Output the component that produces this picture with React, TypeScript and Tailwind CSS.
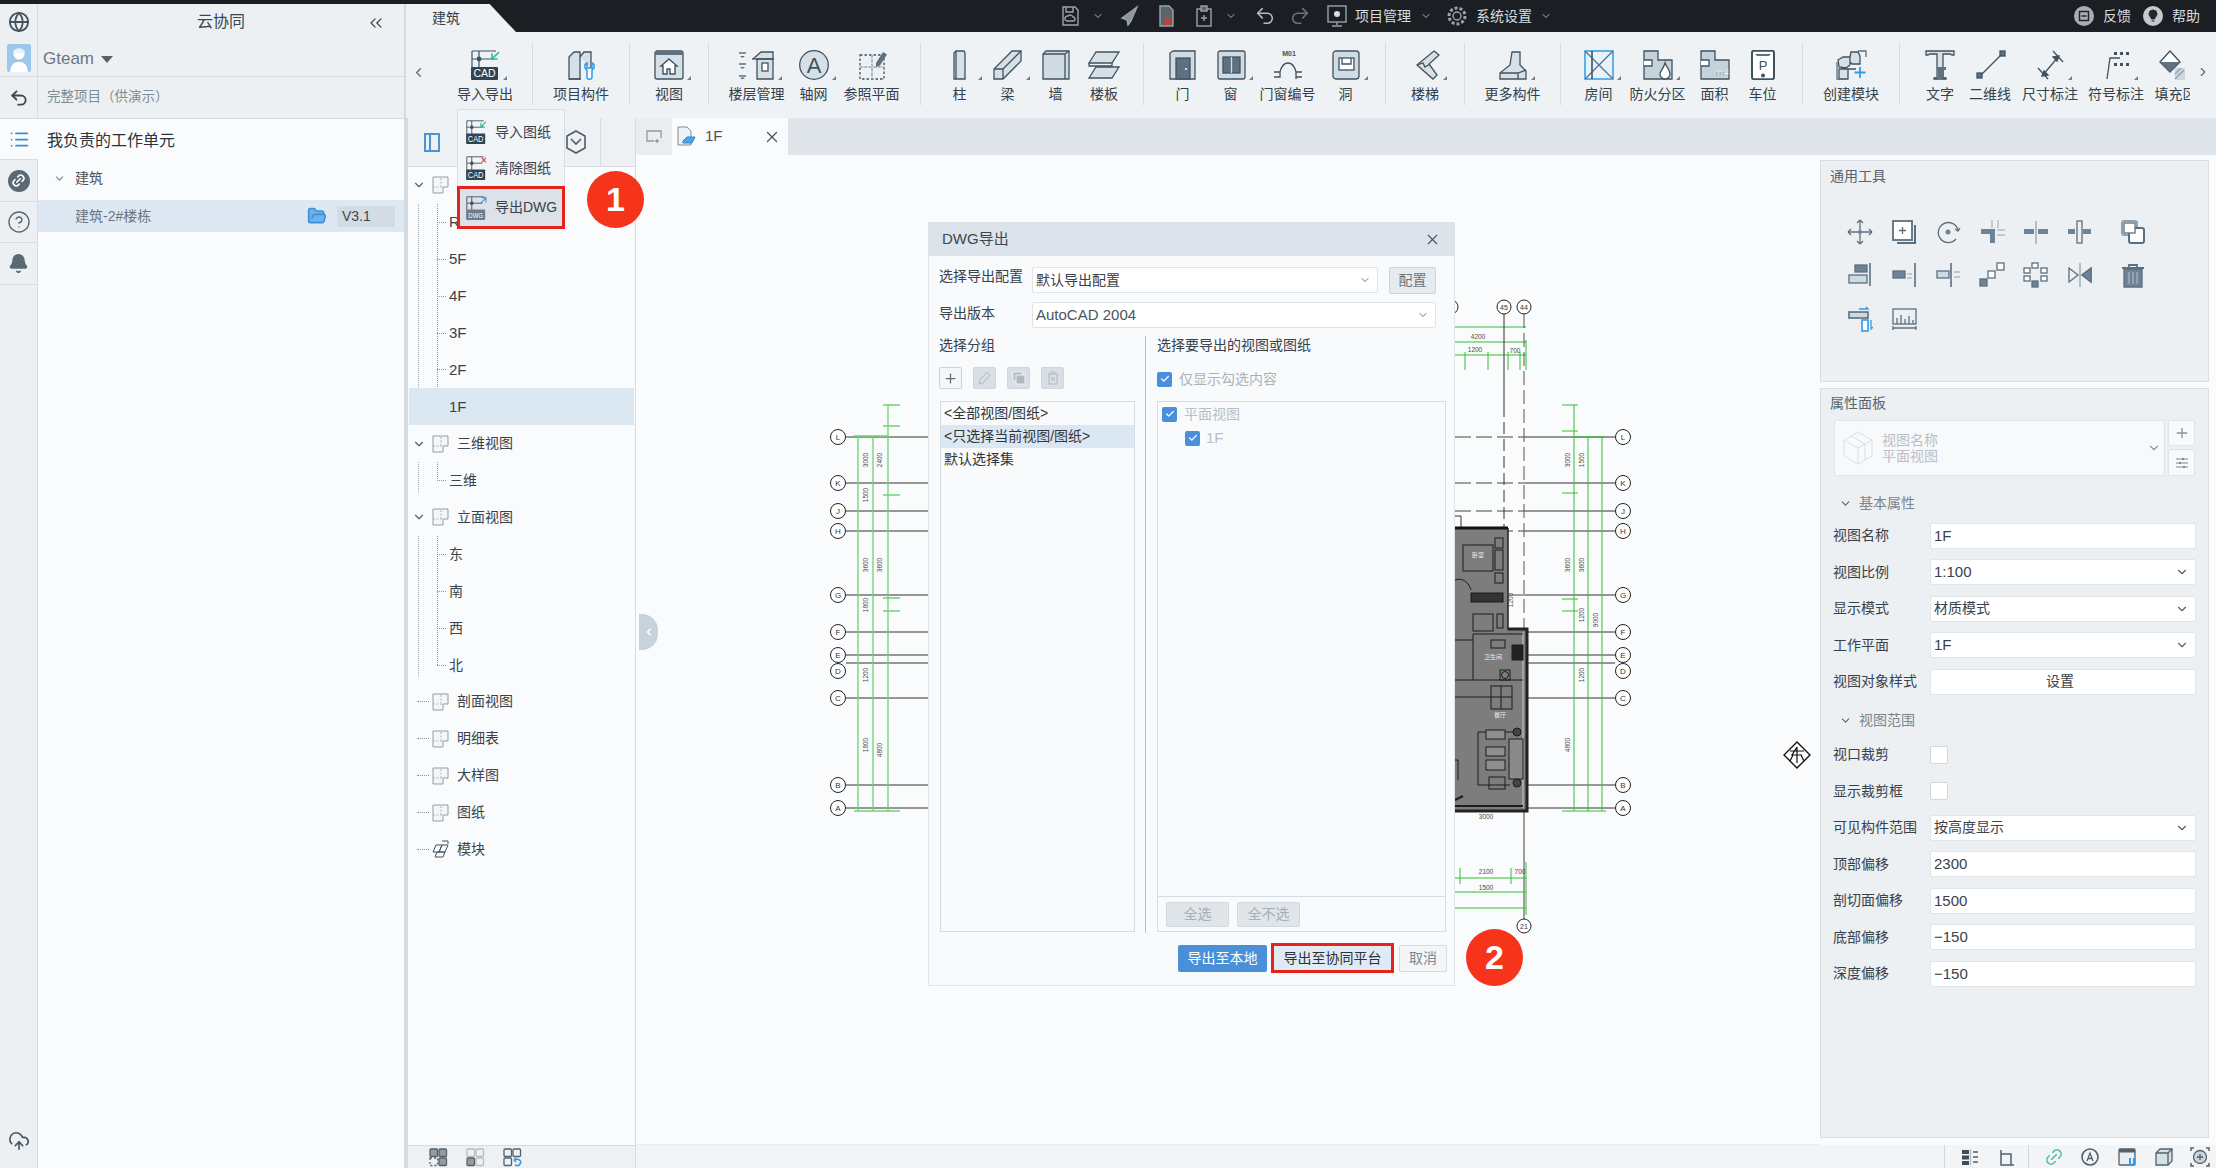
import React from "react";
import { ChevronDown, ChevronLeft, ChevronRight, ChevronsLeft, Bell, CircleHelp, List, Link2, Undo2, Redo2, CloudUpload, X, Plus, Check, Globe, FolderOpen } from "lucide-react";

const ST = "#41525f";
const FL = "#d5e0e7";
const DK = "#5d7182";
const BL = "#2f9bea";

const Svg = ({ w = 34, h = 30, children }: { w?: number; h?: number; children: React.ReactNode }) => (
  <svg width={w} height={h} viewBox={`0 0 ${w} ${h}`} fill="none" stroke={ST} strokeWidth={1.3}>
    {children}
  </svg>
);

const CadBase = ({ arrow, label = "CAD", dark = "#2f4352" }: { arrow: string; label?: string; dark?: string }) => (
  <>
    <path d="M4 1h24M4 1v17M4 9h22M11 1v17" strokeWidth={1.2} />
    <circle cx="11" cy="9" r="2.4" fill={ST} stroke="none" />
    {arrow === "in" && <path d="M31 2l-7 7M24 3.5V9h5.5" stroke="#2db7a3" strokeWidth={1.6} />}
    {arrow === "out" && <path d="M24 9l7-7M25 2h6v6" stroke={BL} strokeWidth={1.6} />}
    {arrow === "del" && <path d="M25 2l6 6M31 2l-6 6" stroke="#e2403a" strokeWidth={1.6} />}
    <rect x="3" y="17" width="27" height="13" rx="1" fill={dark} stroke="none" />
    <text x="16.5" y="27.4" textAnchor="middle" fontSize={label === "CAD" ? 10.5 : 8.5} fill="#fff" stroke="none" fontFamily="Liberation Sans">{label}</text>
  </>
);

const icons: Record<string, React.ReactNode> = {
  cad: <Svg><CadBase arrow="in" /></Svg>,
  comp: <Svg><path d="M5 29V7l5-5h6v27zM16 7l4-5h7v17" fill={FL} /><path d="M5 29h12" /><path d="M23 13c-3 1-3 5 0 7v7c0 3 5 3 5 0v-7c3-2 3-6 0-7v5h-5z" fill="#fff" stroke={BL} strokeWidth={1.5} /></Svg>,
  view: <Svg><rect x="3" y="1" width="28" height="28" rx="2" fill={FL} /><rect x="3" y="1" width="28" height="4" fill={DK} stroke="none" /><path d="M17 9l8 7h-2v8h-5v-5h-3v5h-4v-8H9z" fill="#fff" strokeWidth={1.4} /></Svg>,
  floors: <Svg w={40}><path d="M2 3h7M2 14h7M2 26h7" stroke={DK} strokeWidth={1.4} /><path d="M3 6l2.500 2 2.500-2zM3 17l2.500 2 2.500-2zM3 29l2.500-2 2.500 2z" fill={DK} stroke="none" /><path d="M16 9l8-7h12v7M20 9v20h16V9z" fill={FL} /><path d="M15 9h22" /><rect x="25" y="13" width="6" height="8" fill="#fff" /></Svg>,
  axis: <Svg><circle cx="17" cy="15" r="14.300" fill={FL} /><text x="17" y="23" textAnchor="middle" fontSize="22" fill={ST} stroke="none" fontFamily="Liberation Sans">A</text></Svg>,
  ref: <Svg><path d="M5 5h24v24H5zM5 17h24M17 5v24" strokeDasharray="2.500 2" /><path d="M5 17h24M17 5v24" stroke="#c3d0d9" /><path d="M21 13l7-11 4 2.500-7 11-4 1.500z" fill={DK} stroke="none" /></Svg>,
  col: <Svg><path d="M11 29V3l2-2h8l1 2v26z" fill={FL} /><path d="M13 29V1" /></Svg>,
  beam: <Svg><path d="M3 29V19L21 1h9v10L12 29z" fill={FL} /><path d="M3 19h9v10M12 19L30 1" /></Svg>,
  wall: <Svg><path d="M4 29V4l3-3h23v28z" fill="#cfdce4" /><path d="M4 4h22v25M26 4l4-3" /></Svg>,
  slab: <Svg><path d="M9 2h23l-7 11H2zM9 17h23l-7 11H2z" fill={FL} /><path d="M2 13v3h23v-3M2 28" /></Svg>,
  door: <Svg><path d="M4 29V3l3-2h22v28z" fill="#cfdce4" /><rect x="10" y="8" width="14" height="21" fill={DK} /><circle cx="20" cy="19" r="1" fill="#fff" stroke="none" /></Svg>,
  win: <Svg><rect x="4" y="1" width="27" height="28" rx="2" fill="#cfdce4" /><rect x="9" y="7" width="17" height="16" fill={DK} /><path d="M17.500 7v16" stroke="#cfdce4" /></Svg>,
  tag: <Svg><text x="18" y="6" textAnchor="middle" fontSize="7" fontWeight="700" fill={ST} stroke="none" fontFamily="Liberation Sans">M01</text><path d="M3 22h6c3-12 13-12 16 0v7M25 22h6M25 27h6M3 27h6v-5" /></Svg>,
  hole: <Svg><rect x="4" y="1" width="26" height="28" rx="3" fill="#cfdce4" /><rect x="10" y="8" width="15" height="12" fill="#fff" /><path d="M13 8v6h9V8" /></Svg>,
  stair: <Svg><path d="M26 1l5 4-10 9 8 11-4 4-16-14z" fill={FL} /><path d="M9 15l6-2 2 4 5-3" /></Svg>,
  more: <Svg><path d="M16 2h8v13l6 6v8H4v-6l10-8z" fill={FL} /><path d="M4 23h18l8-3M22 23v6" /></Svg>,
  room: <Svg><rect x="3" y="1" width="28" height="28" fill="#e6f3fb" stroke={BL} strokeWidth={1.500} /><path d="M3 1l28 28M31 1L3 29" stroke={DK} /><path d="M10 1v28" stroke={ST} strokeWidth={1.600} /></Svg>,
  fire: <Svg><path d="M3 1h14v9h14v19H3z" fill="#c4d2db" /><path d="M3 10h8v6H3" fill="#fff" /><path d="M24 13c1 4 5 6 5 11a5 5 0 0 1-10 0c0-3 3-4 5-11z" fill="#fff" /></Svg>,
  area: <Svg><path d="M3 1h14v9h14v19H3z" fill="#c4d2db" /><path d="M3 10h8v6H3" fill="#fff" /><text x="24" y="27" textAnchor="middle" fontSize="11" fill={ST} stroke="#fff" strokeWidth={0.400} fontFamily="Liberation Sans">m²</text></Svg>,
  park: <Svg><rect x="6" y="0.700" width="22" height="28.500" rx="2" stroke={ST} strokeWidth={2} fill="#fff" /><path d="M9 4h16l-2 2H11z" fill={DK} stroke="none" /><text x="17" y="20" textAnchor="middle" fontSize="13" fill={ST} stroke="none" fontFamily="Liberation Sans">P</text><circle cx="17" cy="25.500" r="2" fill={ST} stroke="none" /></Svg>,
  mod: <Svg><path d="M5 17l-1-7 5-3h7v8l-4 3zM16 7l1-5h7l2 4v8h-8l-2-2zM5 29v-10h9v10zM14 19h8" fill={FL} /><path d="M3 12v17h8M24 1h8v6" stroke={DK} /><path d="M26 17v11M20.500 22.500h11" stroke={BL} strokeWidth={1.800} /></Svg>,
  text: <Svg><path d="M3 5V1h28v4h-2l-2-1H20v24h3v1H11v-1h3V4H7L5 5z" fill={FL} /><path d="M14 17h9v3h-2v8h-6v-8h-1z" fill={DK} stroke="none" /></Svg>,
  line: <Svg><path d="M7 26L29 4" /><rect x="4" y="23" width="5" height="5" fill={DK} /><rect x="27" y="1" width="5" height="5" fill={DK} /></Svg>,
  dim: <Svg><path d="M9 26L26 6M5 18l10 11M20 1l10 11" /><path d="M9 26l6-1-4-4zM26 6l-6 1 4 4z" fill={ST} /></Svg>,
  sym: <Svg><path d="M8 29l3-21h10" /><path d="M15 2h3v3h-3zM21 2h3v3h-3zM27 2h3v3h-3zM15 13h3v3h-3zM21 13h3v3h-3zM27 13h3v3h-3z" fill={ST} stroke="none" /></Svg>,
  fill: <Svg><path d="M15 1l10 11-10 10L5 12z" fill="#fff" strokeWidth={1.400} /><path d="M5 12h20l-10 10z" fill={DK} stroke="none" /><path d="M20 18h10v12H20z" fill="#cdd6dc" stroke="none" /><path d="M20 24l6-6M20 29l9-9" stroke="#8ba0ae" /></Svg>,
};

const Sep = () => <div className="w-px h-[62px] mt-[11px] bg-[#d3dbe1] shrink-0" />;

const RItem = ({ w, icon, label, caret, clip }: { w: string; icon: string; label: string; caret?: boolean; clip?: boolean }) => (
  <div className={`${w} shrink-0 flex flex-col items-center`}>
    <div className="relative h-[30px] mt-[18px] flex justify-center">
      {icons[icon]}
      {caret && <span className="absolute right-[-5px] bottom-0 w-0 h-0 border-l-[4px] border-l-transparent border-b-[4px] border-b-[#6f7f8b]" />}
    </div>
    <div className={`mt-[4px] h-[20px] leading-[20px] text-[14px] text-[#34404a] whitespace-nowrap ${clip ? "w-[35px] overflow-hidden" : ""}`}>{label}</div>
  </div>
);

const Ribbon = () => (
  <div className="h-[86px] bg-[#eef2f5] flex shrink-0">
    <div className="w-[32px] flex pt-[33px] pl-[5px]"><ChevronLeft size={15} color="#5d6a74" /></div>
    <div className="w-[94px] flex justify-center"><RItem w="w-[94px]" icon="cad" label="导入导出" caret /></div>
    <Sep />
    <div className="w-[96px] flex justify-center"><RItem w="w-[96px]" icon="comp" label="项目构件" /></div>
    <Sep />
    <div className="w-[78px] flex justify-center"><RItem w="w-[78px]" icon="view" label="视图" caret /></div>
    <Sep />
    <div className="w-[211px] flex justify-center">
      <RItem w="w-[56px]" icon="floors" label="楼层管理" caret />
      <RItem w="w-[58px]" icon="axis" label="轴网" caret />
      <RItem w="w-[58px]" icon="ref" label="参照平面" />
    </div>
    <Sep />
    <div className="w-[222px] flex justify-center">
      <RItem w="w-[48px]" icon="col" label="柱" caret />
      <RItem w="w-[48px]" icon="beam" label="梁" caret />
      <RItem w="w-[48px]" icon="wall" label="墙" />
      <RItem w="w-[49px]" icon="slab" label="楼板" />
    </div>
    <Sep />
    <div className="w-[241px] flex justify-center">
      <RItem w="w-[48px]" icon="door" label="门" />
      <RItem w="w-[48px]" icon="win" label="窗" caret />
      <RItem w="w-[66px]" icon="tag" label="门窗编号" />
      <RItem w="w-[50px]" icon="hole" label="洞" caret />
    </div>
    <Sep />
    <div className="w-[78px] flex justify-center"><RItem w="w-[78px]" icon="stair" label="楼梯" caret /></div>
    <Sep />
    <div className="w-[95px] flex justify-center"><RItem w="w-[95px]" icon="more" label="更多构件" caret /></div>
    <Sep />
    <div className="w-[241px] flex justify-center">
      <RItem w="w-[48px]" icon="room" label="房间" caret />
      <RItem w="w-[70px]" icon="fire" label="防火分区" caret />
      <RItem w="w-[44px]" icon="area" label="面积" />
      <RItem w="w-[52px]" icon="park" label="车位" />
    </div>
    <Sep />
    <div className="w-[96px] flex justify-center"><RItem w="w-[96px]" icon="mod" label="创建模块" /></div>
    <Sep />
    <div className="flex-1 flex pl-[16px]">
      <RItem w="w-[48px]" icon="text" label="文字" />
      <RItem w="w-[52px]" icon="line" label="二维线" />
      <RItem w="w-[68px]" icon="dim" label="尺寸标注" caret />
      <RItem w="w-[64px]" icon="sym" label="符号标注" caret />
      <RItem w="w-[48px]" icon="fill" label="填充区域" clip />
      <div className="pt-[33px]"><ChevronRight size={14} color="#5d6a74" /></div>
    </div>
  </div>
);

const TopIcon = ({ children }: { children: React.ReactNode }) => (
  <svg width="24" height="24" viewBox="0 0 24 24" fill="none" stroke="#9aa4ab" strokeWidth={1.400}>{children}</svg>
);

const TopBar = () => (
  <div className="h-[32px] flex shrink-0 text-[#d9dcde] text-[14px]">
    <div className="relative w-[110px] h-full">
      <div className="h-[28px] mt-[4px] w-[110px] bg-[#eef2f5] [clip-path:polygon(0_0,76%_0,100%_100%,0_100%)] flex items-center pl-[26px] text-[14px] text-[#34404a]">建筑</div>
    </div>
    <div className="flex items-center ml-[542px]">
      <TopIcon><path d="M5 3h12l3 3v15H5z" /><path d="M8 3v5h7V3" /><path d="M9 17a2.500 2.500 0 0 1 1-5 3 3 0 0 1 5 1 2 2 0 0 1 0 4z" /></TopIcon>
      <ChevronDown size={12} color="#aab2b8" className="ml-[10px]" />
      <div className="ml-[13px]"><TopIcon><path d="M20 3L5 14l5 2 1 5 3-4 6-14z" fill="#8b959c" /></TopIcon></div>
      <div className="ml-[13px]"><TopIcon><path d="M6 2h9l4 4v16H6z" fill="#5a646b" /><path d="M11 14l6 7M17 14l-6 7" stroke="#e0362c" strokeWidth={2} /></TopIcon></div>
      <div className="ml-[14px]"><TopIcon><rect x="5" y="5" width="14" height="17" /><rect x="9" y="2" width="6" height="5" fill="#5a646b" /><path d="M12 11v6M9 14h6" /></TopIcon></div>
      <ChevronDown size={12} color="#aab2b8" className="ml-[9px]" />
      <Undo2 size={22} color="#b5bcc1" className="ml-[17px]" strokeWidth={1.700} />
      <Redo2 size={22} color="#6d757b" className="ml-[13px]" strokeWidth={1.700} />
      <div className="ml-[14px]"><TopIcon><rect x="3" y="2" width="18" height="16" /><circle cx="12" cy="10" r="3" fill="#d9dcde" stroke="none" /><path d="M12 18v3M7 22h10" /></TopIcon></div>
      <span className="ml-[6px] whitespace-nowrap">项目管理</span>
      <ChevronDown size={12} color="#aab2b8" className="ml-[9px]" />
      <div className="ml-[13px]"><TopIcon><circle cx="12" cy="12" r="4" /><circle cx="12" cy="12" r="8" strokeDasharray="3 2" strokeWidth={3} /></TopIcon></div>
      <span className="ml-[7px] whitespace-nowrap">系统设置</span>
      <ChevronDown size={12} color="#aab2b8" className="ml-[8px]" />
    </div>
    <div className="flex items-center ml-auto mr-[16px]">
      <svg width="22" height="22" viewBox="0 0 22 22"><circle cx="11" cy="11" r="10" fill="#a8b0b6" /><rect x="6.500" y="6.500" width="9" height="9" fill="none" stroke="#22272b" strokeWidth={1.500} /><path d="M8.500 11h5" stroke="#22272b" strokeWidth={1.500} /></svg>
      <span className="ml-[8px] whitespace-nowrap">反馈</span>
      <svg className="ml-[11px]" width="22" height="22" viewBox="0 0 22 22"><circle cx="11" cy="11" r="10" fill="#c4c9cd" /><path d="M7 9a4 4 0 0 1 8 0c0 2-2 3-2.500 5h-3C9 12 7 11 7 9zM9.500 16h3" fill="#22272b" stroke="#22272b" /></svg>
      <span className="ml-[8px] whitespace-nowrap">帮助</span>
    </div>
  </div>
);

const RailCell = ({ children, h, active }: { children: React.ReactNode; h: string; active?: boolean }) => (
  <div className={`${h} flex items-center justify-center border-b border-[#d5dce2] ${active ? "bg-[#fafbfc]" : "border-r bg-[#edf0f3]"}`}>{children}</div>
);

const LeftPanel = () => (
  <div className="w-[406px] h-[1164px] mt-[4px] shrink-0 flex bg-[#fafbfc] border-r-2 border-[#d3dbe1]">
    <div className="w-[38px] shrink-0 flex flex-col bg-[#edf0f3]">
      <div className="h-[36px] flex items-center justify-center border-r border-[#d5dce2]"><Globe size={22} color="#44525e" /></div>
      <div className="h-[37px] flex items-center justify-center border-r border-b border-[#d5dce2]">
        <svg width="24" height="28" viewBox="0 0 24 28"><rect width="24" height="28" rx="2" fill="#9cc8ee" /><circle cx="12" cy="10" r="5.500" fill="#fff" /><path d="M3 28c1-9 5-10 9-10s8 1 9 10z" fill="#fff" /><path d="M6 9c0-6 12-6 12 0z" fill="#e8f3fc" /></svg>
      </div>
      <RailCell h="h-[42px]"><Undo2 size={20} color="#3c4852" strokeWidth={2.200} /></RailCell>
      <RailCell h="h-[41px]" active><List size={21} color="#2f8fe0" /></RailCell>
      <RailCell h="h-[42px]"><span className="w-[22px] h-[22px] rounded-full bg-[#5b6973] flex items-center justify-center"><Link2 size={15} color="#fff" className="-rotate-45" strokeWidth={2.500} /></span></RailCell>
      <RailCell h="h-[41px]"><CircleHelp size={24} color="#5b6973" strokeWidth={1.400} /></RailCell>
      <RailCell h="h-[42px]"><Bell size={21} color="#5b6973" fill="#5b6973" /></RailCell>
      <div className="flex-1 flex items-end justify-center pb-[16px] border-r border-[#d5dce2]"><CloudUpload size={22} color="#4a5761" strokeWidth={1.800} /></div>
    </div>
    <div className="flex-1 flex flex-col min-w-0">
      <div className="h-[36px] bg-[#edf0f3] flex items-center relative">
        <span className="w-full text-center text-[16px] text-[#3c4650]">云协同</span>
        <ChevronsLeft size={20} color="#3c4650" strokeWidth={1.500} className="absolute right-[18px] top-[9px]" />
      </div>
      <div className="h-[37px] bg-[#edf0f3] border-b border-[#d5dce2] flex items-center pl-[5px] pt-[2px] text-[17px] text-[#6b7680]">
        Gteam <span className="ml-[7px] w-0 h-0 border-l-[6px] border-r-[6px] border-t-[7px] border-l-transparent border-r-transparent border-t-[#55616b]" />
      </div>
      <div className="h-[42px] bg-[#edf0f3] border-b border-[#d5dce2] flex items-center pl-[9px] text-[13.500px] text-[#7f8b95]">完整项目（供演示）</div>
      <div className="h-[41px] flex items-center pl-[9px] pt-[2px] text-[16px] text-[#2c3238]">我负责的工作单元</div>
      <div className="h-[40px] flex items-center pl-[15px] pb-[4px] text-[14px] text-[#4a535b]">
        <ChevronDown size={13} color="#7b8690" className="mr-[9px]" />建筑
      </div>
      <div className="h-[32px] bg-[#dde8f2] flex items-center pl-[37px] text-[14px] text-[#6b7680]">
        建筑-2#楼栋
        <FolderOpen size={20} color="#3d8fdc" fill="#6fb1ea" className="ml-auto" />
        <span className="ml-[10px] mr-[9px] w-[58px] h-[21px] bg-[#d3dce4] flex items-center pl-[5px] text-[#3c4650] text-[14px]">V3.1</span>
      </div>
    </div>
  </div>
);

const Page = () => (
  <svg width="18" height="18" viewBox="0 0 18 18" fill="none" stroke="#8f9da8" className="shrink-0">
    <path d="M1 1h15v10h-5v6H1z" fill="#f4f6f8" />
    <path d="M1 11h10M9 2v8" strokeDasharray="2 1.500" stroke="#a8b4bd" />
  </svg>
);

const Head = ({ label, open, module }: { label: string; open?: boolean; module?: boolean }) => (
  <div className="h-[36.9px] flex items-center text-[14px] text-[#39424a]">
    <span className="w-[22px] flex justify-center shrink-0">
      {open ? <ChevronDown size={14} color="#55616b" /> : <span className="ml-[8px] w-[12px] border-t border-dotted border-[#8a959e]" />}
    </span>
    <span className="ml-[2px] flex">
      {module ? (
        <svg width="18" height="18" viewBox="0 0 18 18" fill="none" stroke="#3e5260"><path d="M1 12l3-7h6l-3 7zM7 12l3-7h6l-3 7zM3 17l2-5h8l-2 5zM10 1h6v3" /></svg>
      ) : <Page />}
    </span>
    <span className="ml-[7px] whitespace-nowrap">{label}</span>
  </div>
);

const Leaf = ({ label, active }: { label: string; active?: boolean }) => {
  const ascii = /^[\x00-\x7f]+$/.test(label);
  return (
    <div className={`h-[36.9px] flex items-center ${ascii ? "text-[15px]" : "text-[14px]"} text-[#39424a] ${active ? "bg-[#dbe7f1] relative mx-px" : ""}`}>
      {!active && <span className="ml-[29px] w-[9px] border-t border-dotted border-[#8a959e]" />}
      <span className={active ? "ml-[40px]" : "ml-[3px]"}>{label}</span>
    </div>
  );
};

const Group = ({ label, children }: { label: string; children: React.ReactNode }) => (
  <>
    <Head label={label} open />
    <div className="relative">
      <span className="absolute left-[10px] top-0 bottom-[6px] border-l border-dotted border-[#a6b0b8]" />
      <span className="absolute left-[29px] top-0 bottom-[18px] border-l border-dotted border-[#8a959e]" />
      {children}
    </div>
  </>
);

const Tree = () => (
  <div className="w-[228px] shrink-0 flex flex-col bg-[#fafbfc] border-r border-[#d5dce2]">
    <div className="h-[49px] flex bg-[#eef1f4] border-b border-[#d5dce2] shrink-0">
      <div className="w-[48px] flex items-center justify-center"><span className="w-[16px] h-[19px] border-2 border-[#4b94d6] flex"><span className="w-[5px] border-r-2 border-[#4b94d6]" /></span></div>
      <div className="w-[48px]" />
      <div className="w-[48px]" />
      <div className="w-[49px] flex items-center justify-center border-r border-[#d5dce2]">
        <svg width="20" height="24" viewBox="0 0 20 24" fill="none" stroke="#4e5d69" strokeWidth={1.600}><path d="M10 1l9 5v12l-9 5-9-5V6z" /><path d="M5 9l5 5 5-5" /></svg>
      </div>
    </div>
    <div className="flex-1">
      <Group label="楼层平面">
        <Leaf label="RF" /><Leaf label="5F" /><Leaf label="4F" /><Leaf label="3F" /><Leaf label="2F" /><Leaf label="1F" active />
      </Group>
      <Group label="三维视图"><Leaf label="三维" /></Group>
      <Group label="立面视图"><Leaf label="东" /><Leaf label="南" /><Leaf label="西" /><Leaf label="北" /></Group>
      <Head label="剖面视图" /><Head label="明细表" /><Head label="大样图" /><Head label="图纸" /><Head label="模块" module />
    </div>
  </div>
);

const yLines = [437, 483, 511, 531, 595, 632, 655, 663, 698, 785, 808];
const yLabels = ["L", "K", "J", "H", "G", "F", "E", "D", "C", "B", "A"];
const yBubble = [437, 483, 511, 531, 595, 632, 655, 671, 698, 785, 808];

const Tiny = ({ x, y, t, r }: { x: number; y: number; t: string; r?: boolean }) => (
  <text x={x} y={y} fontSize={6.500} fill="#4a4a4a" stroke="none" textAnchor="middle" fontFamily="Liberation Sans" transform={r ? `rotate(-90 ${x} ${y})` : undefined}>{t}</text>
);

const Drawing = () => (
  <svg className="absolute inset-0" width="1184" height="990" viewBox="636 155 1184 990" fill="none">
    {yLines.map((y, i) => (
      <g key={y}>
        <path d={`M846 ${y}H930`} stroke="#333" />
        <path d={`M1455 ${y}H1525`} stroke="#444" strokeDasharray={y < 540 ? "16 5" : undefined} />
        <path d={`M1525 ${y}H1615`} stroke="#333" />
        <circle cx="838" cy={yBubble[i]} r="7.500" fill="#fff" stroke="#222" />
        <circle cx="1623" cy={yBubble[i]} r="7.500" fill="#fff" stroke="#222" />
        <text x="838" y={yBubble[i] + 3} fontSize="8" fill="#333" textAnchor="middle" fontFamily="Liberation Sans">{yLabels[i]}</text>
        <text x="1623" y={yBubble[i] + 3} fontSize="8" fill="#333" textAnchor="middle" fontFamily="Liberation Sans">{yLabels[i]}</text>
      </g>
    ))}
    <g stroke="#6fd36f" strokeWidth={1.300}>
      <path d="M858 437V811M873 437V811M888 405V811" />
      <path d="M854 436H888M854 811H900M883 405H900M883 426H900M883 495H900M883 598H900M883 611H900" />
    </g>
    {[[868, 460, "3000"], [868, 495, "1500"], [868, 565, "3600"], [868, 605, "1800"], [868, 675, "1200"], [868, 745, "1800"], [882, 565, "3600"], [882, 750, "4800"], [882, 460, "2400"]].map(([x, y, t], i) => (
      <Tiny key={i} x={x as number} y={y as number} t={t as string} r />
    ))}
    <g stroke="#2fc02f">
      <path d="M1455 327H1526M1455 342H1526M1455 355H1526M1526 340V370M1465 352V370M1488 352V370M1508 352V370M1520 352V370" />
    </g>
    <Tiny x={1478} y={339} t="4200" /><Tiny x={1515} y={353} t="700" /><Tiny x={1475} y={352} t="1200" />
    <path d="M1504 314V405" stroke="#333" /><path d="M1504 405V530" stroke="#333" strokeDasharray="12 5" />
    <path d="M1524 314V630" stroke="#555" strokeDasharray="14 5" /><path d="M1524 810V919" stroke="#444" />
    <circle cx="1504" cy="307" r="7" fill="#fff" stroke="#222" /><circle cx="1524" cy="307" r="7" fill="#fff" stroke="#222" />
    <circle cx="1451" cy="307" r="7" fill="#fff" stroke="#222" />
    <circle cx="1524" cy="926" r="7" fill="#fff" stroke="#222" />
    <text x="1504" y="310" fontSize="7" fill="#333" textAnchor="middle" fontFamily="Liberation Sans">45</text>
    <text x="1524" y="310" fontSize="7" fill="#333" textAnchor="middle" fontFamily="Liberation Sans">44</text>
    <text x="1524" y="929" fontSize="7" fill="#333" textAnchor="middle" fontFamily="Liberation Sans">21</text>
    <path d="M1455 528H1508V630H1527V811H1455z" fill="#7d7d7d" />
    <path d="M1455 516h6v12" stroke="#333" />
    <path d="M1455 528H1508" stroke="#111" strokeWidth={3} />
    <path d="M1508 528V630" stroke="#222" strokeWidth={1.500} />
    <path d="M1508 629H1527V811H1455" stroke="#222" strokeWidth={3} />
    <path d="M1523 632V808" stroke="#ccc" />
    <g stroke="#1c1c1c">
      <rect x="1463" y="545" width="30" height="26" />
      <rect x="1495" y="538" width="8" height="10" /><rect x="1495" y="550" width="8" height="20" /><rect x="1495" y="573" width="8" height="10" />
      <path d="M1455 580c8-3 14 3 16 10M1455 640H1473M1455 680H1523M1473 634V680M1473 634H1523" />
      <rect x="1473" y="614" width="20" height="17" />
      <rect x="1497" y="614" width="6" height="14" />
      <rect x="1471" y="593" width="32" height="9" fill="#333" />
      <rect x="1512" y="645" width="11" height="15" fill="#222" />
      <rect x="1491" y="640" width="14" height="8" /><rect x="1500" y="670" width="10" height="10" />
      <circle cx="1505" cy="675" r="3.500" />
      <rect x="1491" y="686" width="21" height="23" /><path d="M1491 697H1512M1501 686V709" />
      <path d="M1478 732H1517M1478 732V785H1510" />
      <rect x="1486" y="730" width="19" height="9" fill="#8f8f8f" /><rect x="1486" y="747" width="19" height="9" fill="#8f8f8f" /><rect x="1486" y="760" width="19" height="10" fill="#8f8f8f" />
      <rect x="1509" y="739" width="14" height="40" fill="#8a8a8a" />
      <rect x="1489" y="777" width="16" height="12" />
      <circle cx="1517" cy="783" r="4" fill="#444" /><circle cx="1517" cy="732" r="4" fill="#444" />
      <path d="M1455 697H1491M1455 760H1458V780" />
      <path d="M1455 800l8-4M1455 806H1523" strokeWidth={2} />
    </g>
    <g fontSize="6" fill="#eee" fontFamily="Noto Sans CJK SC" textAnchor="middle">
      <text x="1478" y="557">卧室</text><text x="1493" y="659">卫生间</text><text x="1500" y="717">餐厅</text>
    </g>
    <Tiny x={1486} y={819} t="3000" />
    <Tiny x={1513} y={600} t="1200" r />
    <g stroke="#2fc02f">
      <path d="M1574 405V811M1588 437V811M1602 437V811M1574 437H1606M1562 811H1606M1562 405H1578M1562 431H1578M1562 493H1578M1562 599H1578M1562 611H1578" />
    </g>
    {[[1570, 460, "3000"], [1584, 460, "1500"], [1570, 565, "3600"], [1584, 565, "3600"], [1584, 615, "1200"], [1570, 745, "4800"], [1584, 675, "1200"], [1598, 620, "9000"]].map(([x, y, t], i) => (
      <Tiny key={i} x={x as number} y={y as number} t={t as string} r />
    ))}
    <g stroke="#2fc02f">
      <path d="M1455 878H1526M1455 892H1526M1455 908H1526M1526 862V915M1460 868V884M1511 868V884" />
    </g>
    <Tiny x={1486} y={874} t="2100" /><Tiny x={1520} y={874} t="700" /><Tiny x={1486} y={890} t="1500" />
  </svg>
);

const Input = ({ label, value, select, center }: { label: string; value: string; select?: boolean; center?: boolean }) => {
  const ascii = /^[\x00-\x7f−]+$/.test(value);
  return (
    <div className="h-[36.5px] flex items-center">
      <span className="w-[97px] shrink-0 text-[14px] text-[#3a4149] whitespace-nowrap">{label}</span>
      <div className={`w-[266px] h-[26px] bg-white border border-[#e0e5e9] rounded-[2px] flex items-center ${center ? "justify-center" : "pl-[3px]"} pr-[6px] ${ascii ? "text-[15px]" : "text-[14px]"} text-[#3a4149]`}>
        {value}
        {select && <ChevronDown size={14} color="#55616b" className="ml-auto" strokeWidth={2} />}
      </div>
    </div>
  );
};

const CheckRow = ({ label }: { label: string }) => (
  <div className="h-[36.5px] flex items-center">
    <span className="w-[97px] shrink-0 text-[14px] text-[#3a4149] whitespace-nowrap">{label}</span>
    <span className="w-[18px] h-[18px] bg-white border border-[#cfd6dc] rounded-[2px]" />
  </div>
);

const T = ({ children }: { children: React.ReactNode }) => (
  <svg width="26" height="26" viewBox="0 0 26 26" fill="none" stroke="#5c6f7f" strokeWidth={1.300}>{children}</svg>
);
const DF = "#6e8496";
const tools: React.ReactNode[] = [
  <T><path d="M13 1v24M1 13h24M13 1l-3 3M13 1l3 3M13 25l-3-3M13 25l3-3M1 13l3-3M1 13l3 3M25 13l-3-3M25 13l-3 3" /><circle cx="13" cy="13" r="2" fill={DF} stroke="none" /></T>,
  <T><path d="M6 24h18V6" strokeWidth={2} /><rect x="2" y="2" width="19" height="19" fill="#fff" strokeWidth={1.800} /><path d="M11.500 8v7M8 11.500h7" strokeWidth={1.300} /></T>,
  <T><path d="M21 20a10 10 0 1 1 2-9M25 9l-2 3-3-2" /><circle cx="13" cy="13" r="2.500" fill={DF} stroke="none" /></T>,
  <T><path d="M2 10h14v14h-5V15H2z" fill={DF} stroke="none" /><path d="M13 1v8M19 1v8M18 11h8M18 16h8" stroke="#aebbc5" /></T>,
  <T><path d="M1 10h10v5H1zM15 10h10v5H15z" fill={DF} stroke="none" /><path d="M13 2v23" stroke="#8fa1ae" /></T>,
  <T><path d="M1 10h7v5H1zM16 10h8v5h-8z" fill={DF} stroke="none" /><rect x="10" y="2" width="5" height="22" /></T>,
  <T><rect x="2" y="2" width="15" height="14" rx="2" strokeWidth={2} stroke="#8fa1ae" /><rect x="9" y="9" width="15" height="15" rx="2" fill="#fff" strokeWidth={2} stroke={"#5c6f7f"} /><rect x="4" y="4" width="11" height="10" fill="#fff" stroke="#5c6f7f" /></T>,
  <T><rect x="8" y="3" width="12" height="7" fill={DF} /><rect x="2" y="13" width="18" height="8" fill="#ccdae2" /><path d="M23 1v23" strokeWidth={1.600} /></T>,
  <T><rect x="2" y="9" width="12" height="7" fill={DF} /><path d="M16 12h5M16 16h5" stroke="#aebbc5" /><path d="M24 1v24" strokeWidth={1.600} /></T>,
  <T><rect x="2" y="9" width="12" height="7" fill="#ccdae2" /><path d="M16 1v24" strokeWidth={1.600} /><path d="M19 10h6M19 15h6" stroke="#aebbc5" /></T>,
  <T><rect x="1" y="17" width="7" height="7" fill={DF} /><rect x="9" y="9" width="7" height="7" fill="#fff" /><rect x="18" y="1" width="7" height="7" fill="#fff" /></T>,
  <T><rect x="9" y="1" width="6" height="5" fill="#fff" /><rect x="1" y="6" width="6" height="5" fill="#fff" /><rect x="18" y="6" width="6" height="5" fill="#fff" /><rect x="1" y="14" width="6" height="5" fill="#fff" /><rect x="18" y="14" width="6" height="5" fill="#fff" /><rect x="9" y="19" width="6" height="6" fill={DF} /></T>,
  <T><path d="M2 6v14l9-7zM24 6v14l-9-7z" /><path d="M15 13l9-7v14z" fill={DF} /><path d="M13 1v24" stroke="#8fa1ae" /></T>,
  <T><path d="M2 6h22M9 6V3h8v3" strokeWidth={1.800} /><path d="M4 7h18v18H4z" fill={DF} /><path d="M9 10v12M13 10v12M17 10v12" stroke="#a5b5c1" /></T>,
  <T><rect x="2" y="6" width="19" height="6" fill="#ccdae2" strokeWidth={1.600} /><path d="M12 3h9l-2-2" stroke={BL} /><rect x="15" y="14" width="6" height="11" fill="#fff" stroke={BL} strokeWidth={1.600} /><path d="M24 14v9l2-2" stroke={BL} /></T>,
  <T><rect x="2" y="3" width="23" height="15" /><path d="M6 18v-6M10 18v-9M14 18v-5M18 18v-8M22 18v-4M2 22h23M2 20v4M25 20v4" /></T>,
];

const RightPanel = () => (
  <div className="w-[396px] shrink-0 bg-[#fafbfc] pr-[7px] pt-[5px]">
    <div className="h-[222px] bg-[#ecf0f3] border border-[#d7dee3] pl-[9px] pt-[6px]">
      <div className="text-[14px] text-[#58646e] h-[18px] leading-[18px]">通用工具</div>
      <div className="mt-[25px] grid grid-cols-[44px_44px_44px_44px_44px_53px_44px] auto-rows-[43.5px] ml-[17px]">
        {tools.map((t, i) => <div key={i} className="flex items-center">{t}</div>)}
      </div>
    </div>
    <div className="h-[750px] mt-[6px] bg-[#ecf0f3] border border-[#d7dee3] pl-[12px]">
      <div className="h-[31px] flex items-center pb-[2px] -ml-[3px] text-[14px] text-[#58646e]">属性面板</div>
      <div className="flex h-[56px] ml-px">
        <div className="w-[331px] bg-[#f7f9fa] border border-[#dfe4e8] rounded-[2px] flex items-center pl-[6px] pr-[3px] text-[14px] text-[#b9c0c6] leading-[16px]">
          <svg width="34" height="36" viewBox="0 0 34 36" fill="none" stroke="#dcdfe2"><path d="M17 2l14 8v16l-14 8-14-8V10zM3 10l14 8 14-8M17 18v16M10 6l14 8v16" /></svg>
          <div className="ml-[7px]"><div>视图名称</div><div>平面视图</div></div>
          <ChevronDown size={14} color="#8a949c" className="ml-auto" />
        </div>
        <div className="ml-[3px] w-[27px] flex flex-col justify-between">
          <span className="h-[26px] bg-[#f7f9fa] border border-[#dfe4e8] rounded-[2px] flex items-center justify-center"><Plus size={16} color="#8a949c" /></span>
          <span className="h-[27px] bg-[#f7f9fa] border border-[#dfe4e8] rounded-[2px] flex items-center justify-center">
            <svg width="14" height="12" viewBox="0 0 14 12" stroke="#7d8890"><path d="M1 2h12M1 6h12M1 10h12" /><path d="M8 1v2M5 5v2M9 9v2" strokeWidth={2} /></svg>
          </span>
        </div>
      </div>
      <div className="h-[41.5px] pt-[13px] flex items-center pl-[6px] text-[14px] text-[#7a858f]">
        <ChevronDown size={13} color="#5b6670" className="mr-[7px]" />基本属性
      </div>
      <Input label="视图名称" value="1F" />
      <Input label="视图比例" value="1:100" select />
      <Input label="显示模式" value="材质模式" select />
      <Input label="工作平面" value="1F" select />
      <Input label="视图对象样式" value="设置" center />
      <div className="h-[36.5px] pt-[5px] flex items-center pl-[6px] text-[14px] text-[#7a858f]">
        <ChevronDown size={13} color="#5b6670" className="mr-[7px]" />视图范围
      </div>
      <CheckRow label="视口裁剪" />
      <CheckRow label="显示裁剪框" />
      <Input label="可见构件范围" value="按高度显示" select />
      <Input label="顶部偏移" value="2300" />
      <Input label="剖切面偏移" value="1500" />
      <Input label="底部偏移" value="−150" />
      <Input label="深度偏移" value="−150" />
    </div>
  </div>
);

const BottomIcon = ({ children }: { children: React.ReactNode }) => (
  <svg width="20" height="20" viewBox="0 0 20 20" fill="none" stroke="#51626f" strokeWidth={1.300}>{children}</svg>
);

const Square = ({ x, y, f, s = "#51626f" }: { x: number; y: number; f?: string; s?: string }) => <rect x={x} y={y} width="7.500" height="7.500" rx="1" fill={f || "none"} stroke={s} />;

const Chk = ({ size = "w-[15px] h-[15px]" }: { size?: string }) => (
  <span className={`${size} shrink-0 rounded-[2px] flex items-center justify-center bg-[#4a8fdb]`}><Check size={10} color="#fff" strokeWidth={3} /></span>
);

const ToolBtn = ({ children, on }: { children: React.ReactNode; on?: boolean }) => (
  <span className={`w-[23px] h-[22px] border rounded-[2px] flex items-center justify-center ${on ? "border-[#c9d2da] bg-[#f4f6f8]" : "border-[#cfd6dc] bg-[#d9dfe4]"}`}>{children}</span>
);

const Dialog = () => (
  <div className="absolute left-[928px] top-[222px] w-[527px] h-[764px] bg-[#f8fafb] border border-[#dde3e9] text-[14px] text-[#3a4149]">
    <div className="h-[33px] bg-[#dde3ea] flex items-center justify-between pl-[13px] pr-[13px] text-[15px] text-[#3f474f]">
      DWG导出 <X size={17} color="#4a535b" strokeWidth={1.500} />
    </div>
    <div className="pl-[10px]">
      <div className="flex mt-[11px] items-start">
        <span className="w-[93px] h-[18px] leading-[18px]">选择导出配置</span>
        <div className="w-[346px] h-[26px] bg-white border border-[#dfe4e8] rounded-[2px] flex items-center pl-[3px] pr-[6px]">默认导出配置<ChevronDown size={12} color="#6a747c" className="ml-auto" /></div>
        <span className="ml-[11px] w-[47px] h-[27px] bg-[#e6ebef] border border-[#cdd5db] rounded-[2px] flex items-center justify-center text-[#6a747c]">配置</span>
      </div>
      <div className="flex mt-[8px] items-center">
        <span className="w-[93px] -mt-[4px]">导出版本</span>
        <div className="w-[404px] h-[26px] bg-white border border-[#dfe4e8] rounded-[2px] flex items-center pl-[3px] pr-[6px] text-[15px] text-[#4c555d]">AutoCAD 2004<ChevronDown size={12} color="#6a747c" className="ml-auto" /></div>
      </div>
      <div className="flex mt-[8px] h-[597px]">
        <div className="w-[207px] shrink-0 border-r border-[#b9c1c8]">
          <div className="h-[18px] leading-[18px]">选择分组</div>
          <div className="mt-[13px] flex gap-[11px]">
            <ToolBtn on><Plus size={15} color="#5c6f7f" /></ToolBtn>
            <ToolBtn><svg width="14" height="14" viewBox="0 0 14 14" fill="none" stroke="#b0bac2"><path d="M1 13l1-4 7-8 3 3-7 8z" /></svg></ToolBtn>
            <ToolBtn><svg width="14" height="14" viewBox="0 0 14 14" fill="#b0bac2" stroke="#eef1f3"><rect x="1" y="1" width="9" height="9" /><rect x="4" y="4" width="9" height="9" /></svg></ToolBtn>
            <ToolBtn><svg width="12" height="14" viewBox="0 0 12 14" fill="none" stroke="#b0bac2"><path d="M1 3h10M4 3V1h4v2M2 3v10h8V3M5 6v4M7 6v4" /></svg></ToolBtn>
          </div>
          <div className="mt-[12px] ml-px w-[195px] h-[531px] border border-[#d5dce2] bg-[#f8fafb] text-[#2f363d]">
            <div className="h-[23px] leading-[23px] pl-[3px]">&lt;全部视图/图纸&gt;</div>
            <div className="h-[23px] leading-[23px] pl-[3px] bg-[#dbe7f2]">&lt;只选择当前视图/图纸&gt;</div>
            <div className="h-[23px] leading-[23px] pl-[3px]">默认选择集</div>
          </div>
        </div>
        <div className="ml-[11px] w-[289px]">
          <div className="h-[18px] leading-[18px]">选择要导出的视图或图纸</div>
          <div className="mt-[17px] h-[16px] flex items-center"><Chk /><span className="ml-[7px] text-[#aab3ba]">仅显示勾选内容</span></div>
          <div className="mt-[14px] h-[531px] border border-[#d5dce2] flex flex-col text-[#b7bfc6]">
            <div className="h-[24px] flex items-center pl-[4px]"><Chk /><span className="ml-[7px]">平面视图</span></div>
            <div className="h-[24px] flex items-center pl-[27px]"><Chk /><span className="ml-[6px] text-[15px]">1F</span></div>
            <div className="mt-auto h-[35px] border-t border-[#d5dce2] flex items-center pl-[8px] gap-[8px]">
              <span className="w-[63px] h-[25px] bg-[#e0e5ea] border border-[#d2d9df] rounded-[2px] flex items-center justify-center text-[#a5aeb6]">全选</span>
              <span className="w-[63px] h-[25px] bg-[#e0e5ea] border border-[#d2d9df] rounded-[2px] flex items-center justify-center text-[#a5aeb6]">全不选</span>
            </div>
          </div>
        </div>
      </div>
      <div className="mt-[10px] flex justify-end items-center gap-[4px] pr-[7px] h-[30px]">
        <span className="w-[89px] h-[27px] bg-[#4a90d9] rounded-[2px] flex items-center justify-center text-white">导出至本地</span>
        <span className="w-[123px] h-[30px] border-[3px] border-[#e5231b] bg-[#e0eaf5] flex items-center justify-center text-[#2c3238]">导出至协同平台</span>
        <span className="ml-px w-[48px] h-[27px] bg-[#f3f5f7] border border-[#d5dce2] rounded-[2px] flex items-center justify-center text-[#7d8790]">取消</span>
      </div>
    </div>
  </div>
);

const MenuIcon = ({ arrow, label, dark }: { arrow: string; label?: string; dark?: string }) => (
  <svg width="24" height="24" viewBox="0 0 34 30" fill="none" stroke={ST} strokeWidth={1.300} preserveAspectRatio="none"><CadBase arrow={arrow} label={label} dark={dark} /></svg>
);

const Menu = () => (
  <div className="absolute left-[457px] top-[109px] w-[108px] h-[119px] bg-[#f2f5f7] border border-[#d8dee3] text-[14px] text-[#3a4149]">
    <div className="h-[40px] pt-[4px] flex items-center pl-[6px]"><MenuIcon arrow="in" /><span className="ml-[7px]">导入图纸</span></div>
    <div className="h-[36px] flex items-center pl-[6px]"><MenuIcon arrow="del" /><span className="ml-[7px]">清除图纸</span></div>
    <div className="h-[43px] -mx-px -mb-px border-[3px] border-[#e5231b] bg-[#dde2e8] flex items-center pl-[4px]"><MenuIcon arrow="out" label="DWG" dark="#6b7e8d" /><span className="ml-[7px] whitespace-nowrap">导出DWG</span></div>
  </div>
);

const Badge = ({ n, cls }: { n: string; cls: string }) => (
  <div className={`absolute ${cls} w-[57px] h-[57px] rounded-full bg-[#f6341c] flex items-center justify-center text-white text-[34px] font-bold`}>{n}</div>
);

export default function App() {
  return (
    <div className="relative w-[2216px] h-[1168px] overflow-hidden flex bg-[#1b1f23] font-['Liberation_Sans','Noto_Sans_CJK_SC',sans-serif]">
      <LeftPanel />
      <div className="flex-1 flex flex-col min-w-0">
        <TopBar />
        <Ribbon />
        <div className="flex-1 flex min-h-0 bg-[#fafbfc]">
          <div className="w-[2px] bg-[#d3dbe1] shrink-0" />
          <div className="flex flex-col w-[228px] shrink-0">
            <div className="flex-1 flex min-h-0"><Tree /></div>
            <div className="h-[23px] bg-[#eef1f4] border-t border-[#d5dce2] border-r flex items-center pl-[20px] gap-[17px] shrink-0">
              <BottomIcon><Square x={2} y={2} f="#9a9a9a" /><Square x={11} y={2} f="#9a9a9a" /><Square x={11} y={11} f="#9a9a9a" /><rect x={2} y={11} width="7.500" height="7.500" strokeDasharray="2 2" stroke="#51626f" /></BottomIcon>
              <BottomIcon><Square x={2} y={2} s="#bbb" /><Square x={11} y={2} s="#bbb" /><Square x={2} y={11} f="#9a9a9a" /><Square x={11} y={11} s="#bbb" /></BottomIcon>
              <BottomIcon><Square x={2} y={2} /><Square x={11} y={2} /><Square x={2} y={11} /><path d="M12 13c5-2 8 1 6 4-1 2-3 2-5 1M12 13l2-2M12 13l2 2" stroke={BL} strokeWidth={1.600} /></BottomIcon>
            </div>
          </div>
          <div className="flex-1 flex flex-col min-w-0">
            <div className="h-[37px] bg-[#dfe5ea] flex shrink-0">
              <div className="w-[36px] flex items-center justify-center bg-[#e9edf0]">
                <svg width="16" height="14" viewBox="0 0 16 14" fill="none" stroke="#8d99a3" strokeWidth={1.300}><path d="M15 8V1H1v10h7" /><path d="M11 9v4M9 11h4" /></svg>
              </div>
              <div className="w-[116px] bg-[#fafbfc] flex items-center pl-[4px] text-[15px] text-[#4a535b]">
                <svg width="20" height="24" viewBox="0 0 20 24" fill="none" stroke="#7e8d99"><path d="M2 2h9l4 4v14H2z" fill="#eef1f4" /><path d="M7 16l4-4h8l-3 6H7z" fill="#4ba3e8" stroke="#2c85cf" /></svg>
                <span className="ml-[9px]">1F</span>
                <X size={18} color="#4a535b" strokeWidth={1.600} className="ml-auto mr-[7px]" />
              </div>
            </div>
            <div className="flex-1 flex min-h-0">
              <div className="flex-1 relative bg-[#fafbfc] min-w-0 border-b border-[#eceff2]">
                <Drawing />
                <div className="absolute left-[3px] top-[459px] w-[19px] h-[36px] rounded-r-[16px] bg-[#c7d2dc] flex items-center justify-center"><ChevronLeft size={12} color="#fff" strokeWidth={3} /></div>
              </div>
              <RightPanel />
            </div>
            <div className="h-[23px] bg-[#f2f4f6] flex items-center shrink-0">
              <div className="ml-[1308px] w-px h-[23px] bg-[#cfd7dd]" />
              <div className="ml-[15px]"><BottomIcon><path d="M2 3h7v4H2zM2 8.500h7v4H2zM2 14h7v4H2z" fill="#3e4d59" stroke="none" /><path d="M10.500 2v16" stroke="#aebbc5" /><path d="M13 5h5M13 10h5M13 15h5" /></BottomIcon></div>
              <div className="ml-[16px]"><BottomIcon><path d="M5 3v15h13M5 7h10v11" strokeWidth={1.500} /></BottomIcon></div>
              <div className="ml-[12px] w-px h-[23px] bg-[#cfd7dd]" />
              <div className="ml-[15px]"><Link2 size={20} color="#58c2aa" strokeWidth={2} className="-rotate-45" /></div>
              <div className="ml-[16px]"><BottomIcon><circle cx="10" cy="10" r="8" strokeWidth={1.600} /><path d="M7 14l3-8 3 8M8 11.500h4" /></BottomIcon></div>
              <div className="ml-[17px]"><BottomIcon><rect x="2" y="2" width="16" height="16" rx="1" fill="#e9eef2" /><rect x="2" y="2" width="16" height="3.500" fill="#51626f" stroke="none" /><path d="M13 11v5a2 2 0 0 0 4 0v-5" stroke={BL} strokeWidth={2} /></BottomIcon></div>
              <div className="ml-[17px]"><BottomIcon><path d="M2 18V6l4-4h12v12l-4 4z" fill="#d5e0e7" /><path d="M2 6h12v12M14 6l4-4" /></BottomIcon></div>
              <div className="ml-[16px]"><BottomIcon><circle cx="10" cy="10" r="6.500" fill="#c9d3da" /><path d="M10 7v6M7 10h6" /><path d="M1 4V1h3M16 1h3v3M19 16v3h-3M4 19H1v-3" strokeWidth={1.500} /></BottomIcon></div>
            </div>
          </div>
        </div>
      </div>
      <Menu />
      <Dialog />
      <Badge n="1" cls="left-[587px] top-[171px]" />
      <Badge n="2" cls="left-[1466px] top-[929px]" />
      <svg className="absolute left-[1783px] top-[741px]" width="28" height="28" viewBox="0 0 28 28" fill="none" stroke="#111">
        <path d="M14 1l13 13-13 13L1 14z" strokeWidth={1.400} fill="#fff" />
        <path d="M14 6v16M7 10h14M10 14l-3 6M18 14l3 6M14 6l-5 8h10" strokeWidth={1.200} />
      </svg>
    </div>
  );
}
